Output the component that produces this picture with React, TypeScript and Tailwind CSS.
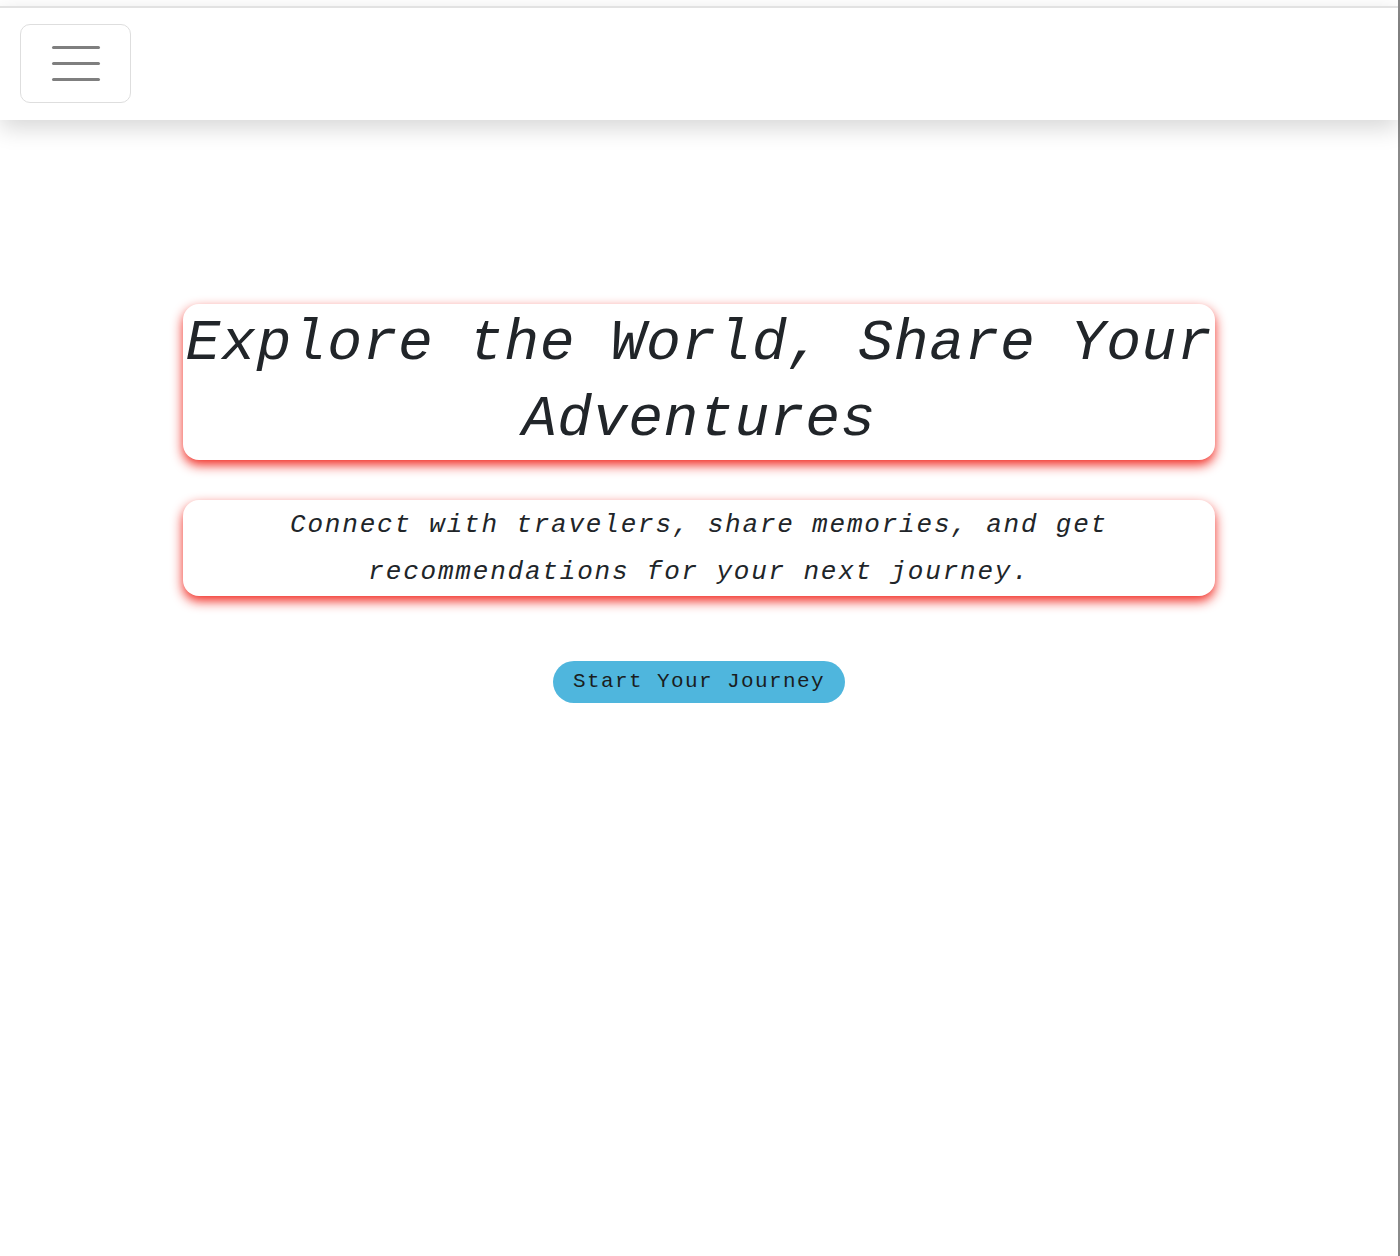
export default function App() {
  return (
    <div className="flex min-h-[1256px] bg-white font-['Liberation_Mono',monospace] text-[#212529]">
      <main className="flex w-[1398px] flex-col">
        <div className="h-[6px] bg-white" />
        <nav
          className={`relative z-10 h-[114px] border-t-2 border-[#e2e2e2] bg-white pl-5 pt-4 shadow-[0_8px_22px_rgba(0,0,0,0.16)]`}
        >
          <button
            className={`flex h-[79px] w-[111px] flex-col items-center justify-center gap-[13px] rounded-[10px] border border-[#dedede] bg-white`}
          >
            <span className="h-[3px] w-12 rounded-full bg-[#7f7f7f]" />
            <span className="h-[3px] w-12 rounded-full bg-[#7f7f7f]" />
            <span className="h-[3px] w-12 rounded-full bg-[#7f7f7f]" />
          </button>
        </nav>

        <section className="mt-[184px] flex flex-col items-center">
          <div
            className={`w-[1032px] rounded-2xl bg-white py-[2px] text-center shadow-[0_5px_12px_rgba(240,30,20,0.95)]`}
          >
            <h1 className="text-[58px] leading-[76px] tracking-[0.6px] italic">
              Explore the World, Share Your Adventures
            </h1>
          </div>

          <div
            className={`mt-10 w-[1032px] rounded-2xl bg-white pt-[2px] text-center shadow-[0_5px_12px_rgba(240,30,20,0.95)]`}
          >
            <p className="px-24 text-[26px] leading-[47px] tracking-[1.8px] italic">
              Connect with travelers, share memories, and get recommendations
              for your next journey.
            </p>
          </div>

          <button
            className={`mt-[65px] h-[42px] w-[292px] rounded-full bg-[#4fb6dd] text-[21px] tracking-[1.4px] text-[#1a1d20]`}
          >
            Start Your Journey
          </button>
        </section>
      </main>
      <div className="w-[2px] bg-[#8a8a8a]" />
    </div>
  );
}
